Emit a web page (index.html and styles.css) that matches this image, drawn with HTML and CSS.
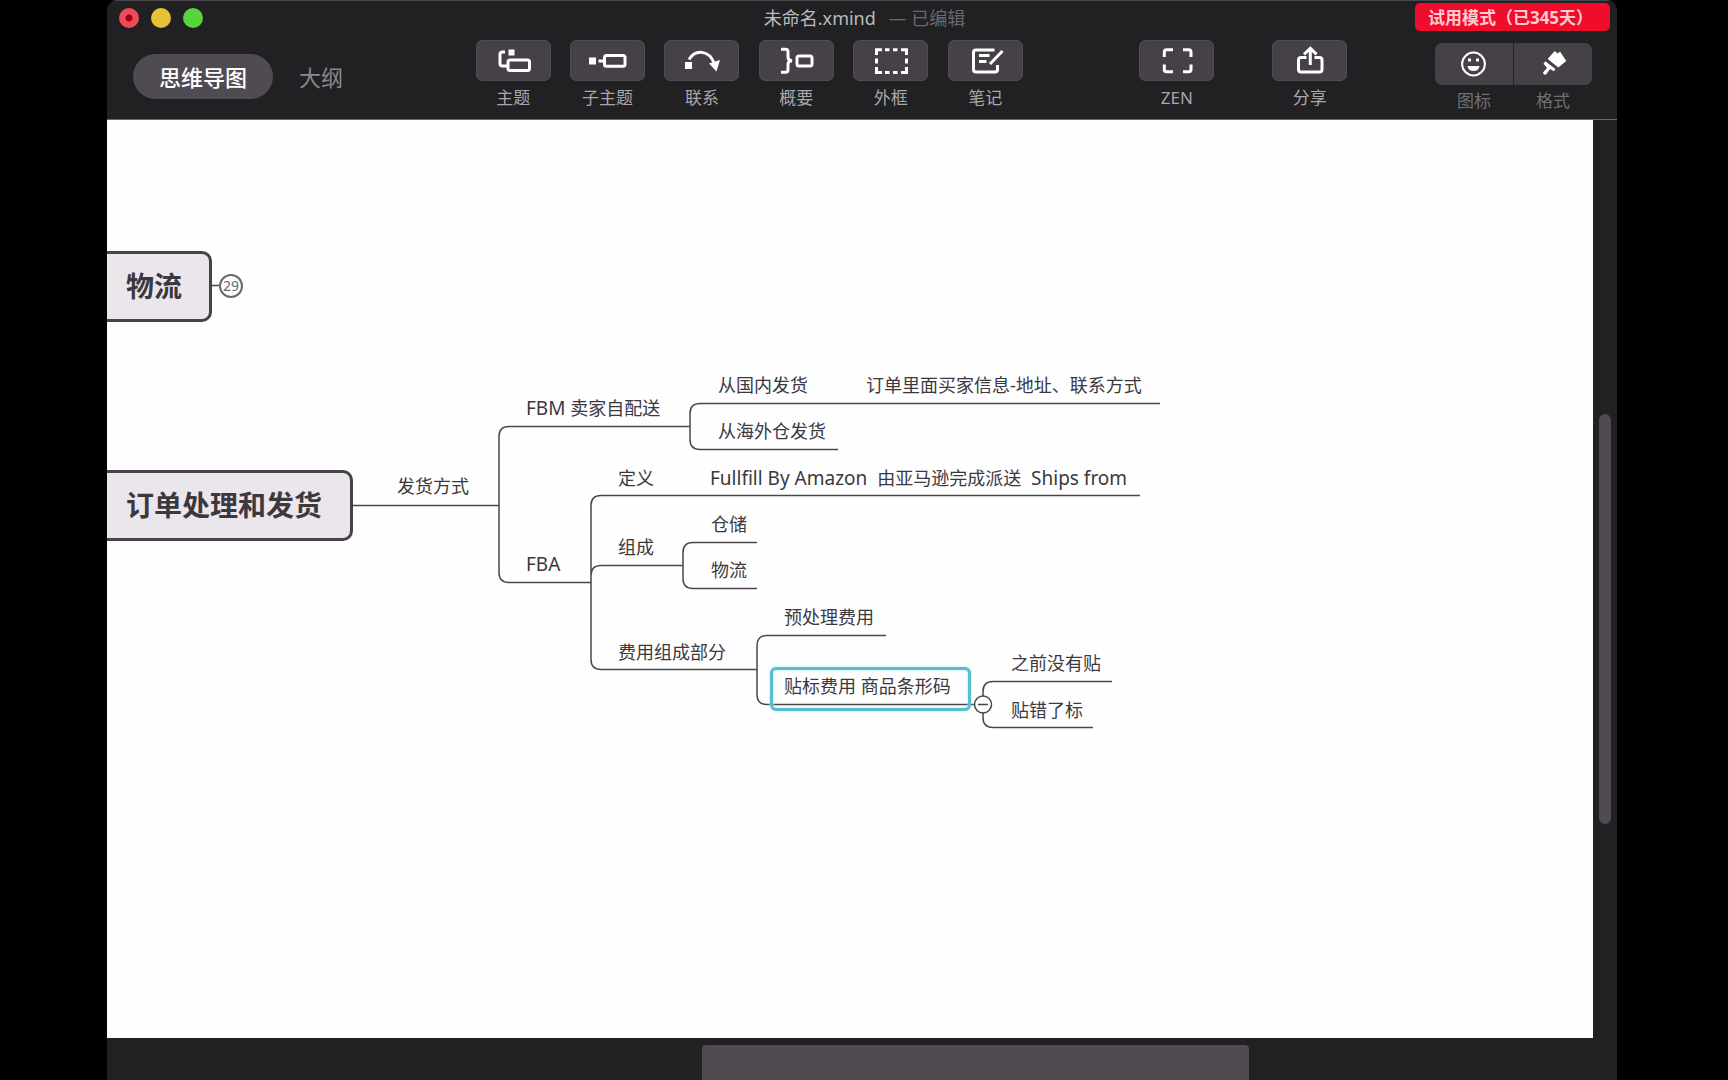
FILE: index.html
```html
<!DOCTYPE html>
<html lang="zh-CN">
<head>
<meta charset="utf-8">
<title>未命名.xmind</title>
<link rel="stylesheet" href="styles.css">
</head>
<body>
<div class="window">
  <header class="header">
    <div class="titlebar">
      <div class="lights">
        <button class="light close" aria-label="关闭"></button>
        <button class="light minimize" aria-label="最小化"></button>
        <button class="light maximize" aria-label="缩放"></button>
      </div>
      <h1 class="title">未命名.xmind <span class="edited">— 已编辑</span></h1>
      <div class="trial-side"><button class="trial">试用模式（已345天）</button></div>
    </div>
    <div class="toolbar">
      <nav class="views">
        <button class="view active">思维导图</button>
        <button class="view">大纲</button>
      </nav>
      <div class="space space-a"></div>
      <div class="tools">
        <button class="tool">
          <svg class="icon" viewBox="0 0 75 41"><path class="fill" d="M32.500 9.500h6v6h-6z"/><path d="M29 12h-2.500q-2.500 0-2.500 2.500v9q0 2.500 2.500 2.500H31"/><rect x="32" y="20" width="21.500" height="10.500" rx="2"/></svg>
          <span>主题</span>
        </button>
        <button class="tool">
          <svg class="icon" viewBox="0 0 75 41"><path class="fill" d="M19 17.500h7v7h-7z"/><path d="M28.500 21H34"/><rect x="34.500" y="15.600" width="20.500" height="10.600" rx="2"/></svg>
          <span>子主题</span>
        </button>
        <button class="tool">
          <svg class="icon" viewBox="0 0 75 41"><path class="fill" d="M21 22h7v7h-7zM45 23.500l11-3.500-3.500 11.500z"/><path d="M25 19.500C31 9.500 45 9 50.500 24"/></svg>
          <span>联系</span>
        </button>
        <button class="tool">
          <svg class="icon" viewBox="0 0 75 41"><path d="M22 9.300h4.500q2.500 0 2.500 2.500v5.500q0 3 4 3.400-4 .4-4 3.400v5.700q0 2.500-2.500 2.500H22"/><rect x="38" y="16" width="15" height="10" rx="2"/></svg>
          <span>概要</span>
        </button>
        <button class="tool">
          <svg class="icon" viewBox="0 0 75 41"><path d="M23.500 15V9.700H29M32 9.700h4.500M40 9.700h4.500M48 9.700h5.500V15M53.500 18.500v5M53.500 27v5.500H48M44.500 32.500H40M36.500 32.500H32M29 32.500h-5.500V27M23.500 23.500v-5"/></svg>
          <span>外框</span>
        </button>
        <button class="tool">
          <svg class="icon" viewBox="0 0 75 41"><path d="M46.500 10H28q-2.500 0-2.500 2.500v17q0 2.500 2.500 2.500h19q2.500 0 2.500-2.500V25M31 15.500h10.500M31 21.500h7.500M54.500 11 42 24"/></svg>
          <span>笔记</span>
        </button>
      </div>
      <div class="space space-b"></div>
      <button class="tool">
        <svg class="icon" viewBox="0 0 75 41"><path d="M25.300 17v-5q0-2.300 2.300-2.300H34M44 9.700h5.700q2.300 0 2.300 2.300v5M52 24.500v5q0 2.300-2.300 2.300H44M34 31.800h-6.400q-2.300 0-2.300-2.300v-5"/></svg>
        <span>ZEN</span>
      </button>
      <div class="space space-c"></div>
      <button class="tool">
        <svg class="icon" viewBox="0 0 75 41"><path d="M34.500 17.500H29q-2.500 0-2.500 2.500v9.500q0 2.500 2.500 2.500h18.500q2.500 0 2.500-2.500V20q0-2.500-2.500-2.500h-5M38.300 25V9M32 14.300l6.300-6 6.300 6"/></svg>
        <span>分享</span>
      </button>
      <div class="space space-d"></div>
      <div class="panels">
        <button class="panel">
          <svg class="icon" viewBox="0 0 78 42"><circle cx="38.500" cy="21" r="11.400" stroke-width="2.500"/><path class="fill" d="M33 15.500h3v3h-3zM41 15.500h3v3h-3zM32.500 23h12q-.5 5-6 5t-6-5z"/></svg>
          <span>图标</span>
        </button>
        <button class="panel">
          <svg class="icon" viewBox="0 0 78 42"><path class="fill" d="M40.700 8l3 2.500 2.300-2L52.300 18l-8 6.500L33.700 16zM31.300 18.200l10.200 7.800-1.800 2.300-3.500-2.200-4.200 5.500q-3 .6-3-2l4-4.600-3.500-4.300z"/></svg>
          <span>格式</span>
        </button>
      </div>
    </div>
  </header>
  <div class="workspace">
    <main class="canvas">
      <svg class="links" width="1486" height="918" viewBox="107 120 1486 918" aria-hidden="true">
        <path d="M212 285.500h7M353 505.500h146M690 426.500H509q-10 0-10 10v136q0 10 10 10h82"/>
        <path d="M1160 403.500H700q-10 0-10 10v26q0 10 10 10h138"/>
        <path d="M1140 495.500H601q-10 0-10 10v154q0 10 10 10h156M591 575.500q0-10 10-10h82"/>
        <path d="M757 542.500h-64q-10 0-10 10v26q0 10 10 10h64"/>
        <path d="M886 635.500H767q-10 0-10 10v49q0 10 10 10h208"/>
        <path d="M1112 681.500H993q-10 0-10 10v26q0 10 10 10h100"/>
        <circle class="fold" cx="983" cy="704.500" r="8.500"/>
        <path d="M978 704.500h10"/>
      </svg>
      <div class="root logistics">物流</div>
      <button class="count">29</button>
      <div class="root orders">订单处理和发货</div>
      <div class="selection"></div>
      <div class="node method">发货方式</div>
      <div class="node fbm"><span class="latin">FBM</span> 卖家自配送</div>
      <div class="node domestic">从国内发货</div>
      <div class="node buyer">订单里面买家信息-地址、联系方式</div>
      <div class="node overseas">从海外仓发货</div>
      <div class="node fba"><span class="latin">FBA</span></div>
      <div class="node definition">定义</div>
      <div class="node fulfil"><span class="latin">Fullfill By Amazon  </span>由亚马逊完成派送<span class="latin">  Ships from</span></div>
      <div class="node parts">组成</div>
      <div class="node storage">仓储</div>
      <div class="node shipping">物流</div>
      <div class="node fees">费用组成部分</div>
      <div class="node prep">预处理费用</div>
      <div class="node label-fee">贴标费用 商品条形码</div>
      <div class="node missing">之前没有贴</div>
      <div class="node wrong">贴错了标</div>
    </main>
    <div class="scroll-y"><div class="thumb"></div></div>
    <div class="scroll-x"><div class="thumb"></div></div>
  </div>
</div>
</body>
</html>
```
FILE: styles.css
```css
* { box-sizing: border-box; }

body {
  margin: 0;
  background: #000;
  font-family: "Noto Sans", "Noto Sans CJK SC", sans-serif;
}

button {
  margin: 0;
  padding: 0;
  border: 0;
  background: none;
  color: inherit;
  font: inherit;
}

.window {
  display: flex;
  flex-direction: column;
  min-height: 100vh;
  margin: 0 111px 0 107px;
  overflow: hidden;
  border-radius: 10px 10px 0 0;
  background: #212023;
}

.header {
  height: 120px;
  border-top: 1px solid #48464a;
  border-bottom: 1px solid #69676b;
}

.titlebar {
  display: grid;
  grid-template-columns: 1fr auto 1fr;
  height: 34px;
  padding: 0 7px 0 12px;
}

.lights {
  display: flex;
  align-items: center;
  gap: 12px;
}

.light {
  width: 20px;
  height: 20px;
  border-radius: 50%;
}

.close { background: radial-gradient(circle, #a00014 3px, #ef4a58 4px); }
.minimize { background: #e5c238; }
.maximize { background: #58d43c; }

.title {
  margin: 0;
  color: #bcbabd;
  font-size: 18px;
  font-weight: 400;
  line-height: 34px;
}

.edited {
  margin-left: 8px;
  color: #6b696d;
}

.trial-side { text-align: right; }

.trial {
  width: 195px;
  height: 28px;
  margin-top: 2px;
  padding-right: 4px;
  border-radius: 5px;
  background: #ef0d2b;
  color: #ffc9d1;
  font-size: 17px;
  font-weight: 700;
  line-height: 30px;
  white-space: nowrap;
  vertical-align: top;
}

.toolbar {
  display: flex;
  padding: 5px 25px 0 26px;
}

.views {
  display: flex;
  gap: 26px;
  margin-top: 14px;
}

.view {
  height: 45px;
  color: #8b898d;
  font-size: 22px;
  line-height: 42px;
}

.view.active {
  padding: 0 26px;
  border-radius: 23px;
  background: #504b52;
  color: #fff;
  font-weight: 500;
}

.space { flex-basis: 0; }
.space-a { flex-grow: 133; }
.space-b { flex-grow: 117; }
.space-c { flex-grow: 58; }
.space-d { flex-grow: 88; }

.tools {
  display: flex;
  justify-content: space-between;
  width: 547px;
}

.tool {
  display: flex;
  flex-direction: column;
  align-items: center;
  width: 75px;
  color: #a9a7ab;
  font-size: 17px;
  line-height: 24px;
}

.icon {
  display: block;
  width: 100%;
  height: 41px;
  fill: none;
  stroke: #fff;
  stroke-width: 3px;
}

.icon circle { stroke-width: 2px; }

.icon .fill {
  fill: #fff;
  stroke: none;
}

.tool .icon {
  margin-bottom: 5px;
  border-radius: 7px;
  background: #454147;
  box-shadow: inset 0 0 0 1px #504c52;
}

.panels {
  display: flex;
  gap: 1px;
  margin-top: 3px;
}

.panel {
  display: flex;
  flex-direction: column;
  align-items: center;
  width: 78px;
  color: #727074;
  font-size: 17px;
  line-height: 24px;
}

.panel .icon {
  height: 42px;
  margin-bottom: 4px;
  border-radius: 7px 0 0 7px;
  background: #454147;
}

.panel + .panel .icon { border-radius: 0 7px 7px 0; }

.workspace {
  display: grid;
  flex: 1;
  grid-template-columns: 1fr 24px;
  grid-template-rows: 1fr 42px;
}

.canvas {
  position: relative;
  overflow: hidden;
  background: #fefefe;
  color: #3c393e;
}

.links {
  position: absolute;
  top: 0;
  left: 0;
  fill: none;
  stroke: #4a474c;
  stroke-width: 1.5;
}

.fold { fill: #fefefe; }

.root {
  position: absolute;
  left: -20px;
  height: 71px;
  padding-left: 36px;
  border: 3px solid #464248;
  border-radius: 10px;
  background: #ebe6ec;
  font-size: 28px;
  font-weight: 700;
  line-height: 64px;
  white-space: nowrap;
}

.logistics { top: 131px; width: 125px; }
.orders { top: 350px; width: 266px; }

.count {
  position: absolute;
  top: 154px;
  left: 112px;
  width: 24px;
  height: 24px;
  border: 2px solid #6b686d;
  border-radius: 50%;
  background: #fefefe;
  color: #6b686d;
  font-size: 14px;
  line-height: 20px;
}

.selection {
  position: absolute;
  top: 547px;
  left: 663px;
  width: 201px;
  height: 44px;
  border: 3px solid #5bbccc;
  border-radius: 6px;
  box-shadow: 0 0 3px #a5eef8, inset 0 0 3px #a5eef8;
}

.node {
  position: absolute;
  font-size: 18px;
  line-height: 26px;
  white-space: pre;
}

.latin { font-size: 19px; }

.method { top: 353px; left: 290px; }
.fbm { top: 275px; left: 419px; }
.domestic { top: 252px; left: 611px; }
.buyer { top: 252px; left: 759px; }
.overseas { top: 298px; left: 611px; }
.fba { top: 431px; left: 419px; }
.definition { top: 345px; left: 511px; }
.fulfil { top: 345px; left: 603px; }
.parts { top: 414px; left: 511px; }
.storage { top: 391px; left: 604px; }
.shipping { top: 437px; left: 604px; }
.fees { top: 519px; left: 511px; }
.prep { top: 484px; left: 677px; }
.label-fee { top: 553px; left: 677px; }
.missing { top: 530px; left: 904px; }
.wrong { top: 577px; left: 904px; }

.scroll-y {
  display: grid;
  grid-template-rows: 294fr 411fr 214fr;
  padding: 0 6px;
}

.scroll-x {
  display: grid;
  grid-column: 1 / -1;
  grid-template-columns: 595fr 547fr 368fr;
  padding-top: 7px;
}

.thumb { background: #504b50; }

.scroll-y .thumb {
  grid-row: 2;
  border-radius: 6px;
}

.scroll-x .thumb {
  grid-column: 2;
  border-radius: 4px 4px 0 0;
}
```
